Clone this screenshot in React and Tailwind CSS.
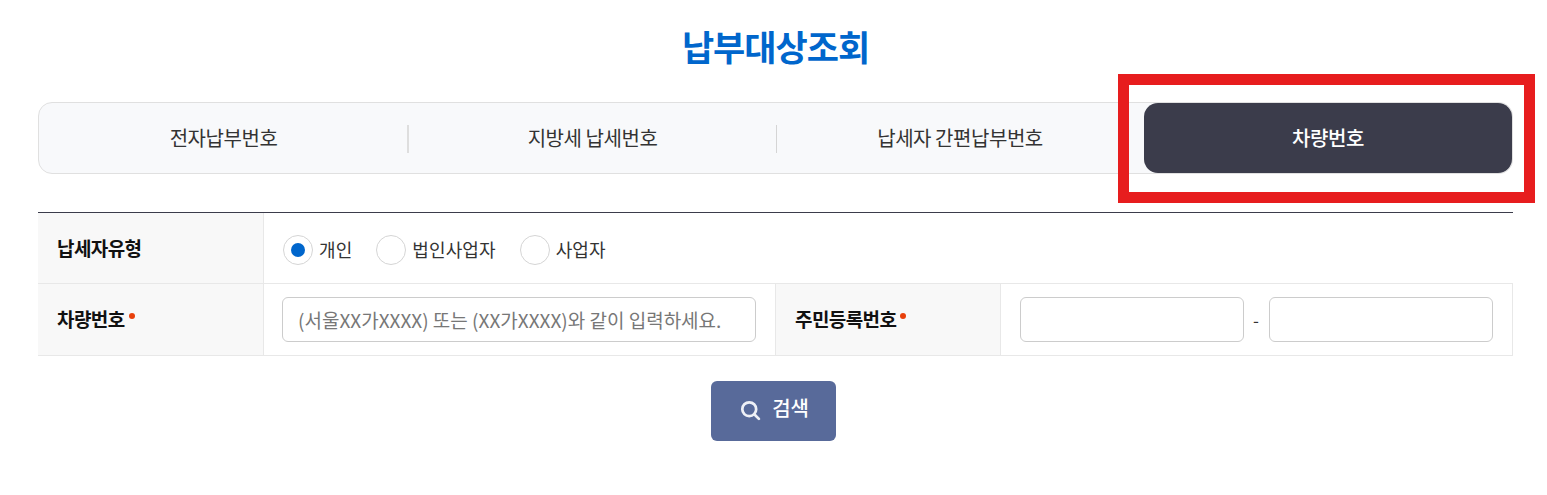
import React from 'react';

const font = 'font-["Noto_Sans_CJK_KR","Noto_Sans",sans-serif]';

function Radio({ label, checked }) {
  return (
    <label className="flex items-center gap-[6px]">
      <span className="w-[30px] h-[30px] rounded-full border border-[#d5d5d5] bg-white flex items-center justify-center">
        {checked && <span className="w-[14px] h-[14px] rounded-full bg-[#0066cc]" />}
      </span>
      <span className="text-[18px] text-[#333] tracking-[0.1px]">{label}</span>
    </label>
  );
}

function Th({ children, required, className }) {
  return (
    <div className={`bg-[#f8f8f8] flex items-center pl-[19px] text-[19px] font-bold text-[#111] tracking-[-0.6px] ${className}`}>
      {children}
      {required && <span className="w-[6px] h-[6px] rounded-full bg-[#e8400c] ml-[4px] mb-[8px]" />}
    </div>
  );
}

export default function App() {
  const tabs = [
    { label: '전자납부번호', cls: 'w-[370px]', sep: 'w-[2px] bg-[#dedede]' },
    { label: '지방세 납세번호', cls: 'w-[368px]', sep: 'w-px bg-[#d5d5d5]' },
    { label: '납세자 간편납부번호', cls: 'w-[367px]' },
  ];

  return (
    <div className={`relative w-[1547px] h-[495px] bg-white pl-[38px] pr-[34px] pt-[19px] overflow-hidden ${font}`}>
      <h1 className="text-center text-[35px] leading-[54px] font-bold text-[#0066cc] tracking-[-1px]">납부대상조회</h1>

      {/* 탭 */}
      <div className="mt-[29px] h-[72px] flex rounded-[14px] border border-[#e0e0e0] bg-[#f8f9fb]">
        {tabs.map((t) => (
          <div key={t.label} className={`${t.cls} flex items-center justify-center relative pr-[1px] text-[20px] text-[#333] tracking-[-0.45px]`}>
            {t.label}
            {t.sep && <span className={`absolute right-0 top-[22px] h-[28px] ${t.sep}`} />}
          </div>
        ))}
        <div className="flex-1 rounded-[14px] bg-[#3b3c4b] flex items-center justify-center text-[20px] font-medium text-white tracking-[-0.4px]">
          차량번호
        </div>
      </div>

      {/* 조회 폼 */}
      <div className="mt-[38px] border-t border-[#3b3c4b]">
        <div className="flex h-[71px] border-b border-[#e8e8e8]">
          <Th className="w-[226px] border-r border-[#e8e8e8]">납세자유형</Th>
          <div className="flex-1 flex items-center gap-[24px] pl-[19px] pt-[3px]">
            <Radio label="개인" checked />
            <Radio label="법인사업자" />
            <Radio label="사업자" />
          </div>
        </div>
        <div className="flex h-[72px] border-b border-[#e8e8e8]">
          <Th required className="w-[226px] border-r border-[#e8e8e8]">차량번호</Th>
          <div className="w-[512px] flex items-center pl-[18px] pr-[19px] border-r border-[#e8e8e8]">
            <input
              readOnly
              placeholder="(서울XX가XXXX) 또는 (XX가XXXX)와 같이 입력하세요."
              className="w-full h-[45px] rounded-[6px] border border-[#cccccc] px-[15px] text-[19px] outline-none placeholder:text-[#777]"
            />
          </div>
          <Th required className="w-[225px] border-r border-[#e8e8e8]">주민등록번호</Th>
          <div className="flex-1 flex items-center pl-[19px] pr-[19px] border-r border-[#e8e8e8]">
            <input readOnly className="w-[224px] h-[45px] rounded-[6px] border border-[#cccccc] outline-none" />
            <span className="w-[25px] pr-[1px] text-center text-[17px] text-[#333]">-</span>
            <input readOnly className="w-[224px] h-[45px] rounded-[6px] border border-[#cccccc] outline-none" />
          </div>
        </div>
      </div>

      <div className="mt-[25px] flex justify-center pr-[4px]">
        <button className="w-[125px] h-[60px] rounded-[6px] bg-[#586a9a] flex items-center justify-center gap-[11px] pb-[6px] pl-[2px] text-[20px] font-medium text-white tracking-[-0.2px]">
          <svg viewBox="0 0 20 20" fill="none" stroke="#eef0f6" strokeWidth="2.6" strokeLinecap="round" className="w-[21px] h-[21px] mt-[5px]">
            <circle cx="8.8" cy="8.8" r="6.6" />
            <path d="M13.8 13.8L18 18" />
          </svg>
          검색
        </button>
      </div>

      {/* 강조 표시 */}
      <div className="absolute left-[1118px] top-[74px] w-[417px] h-[129px] border-[11px] border-[#e71d1e] pointer-events-none" />
    </div>
  );
}
